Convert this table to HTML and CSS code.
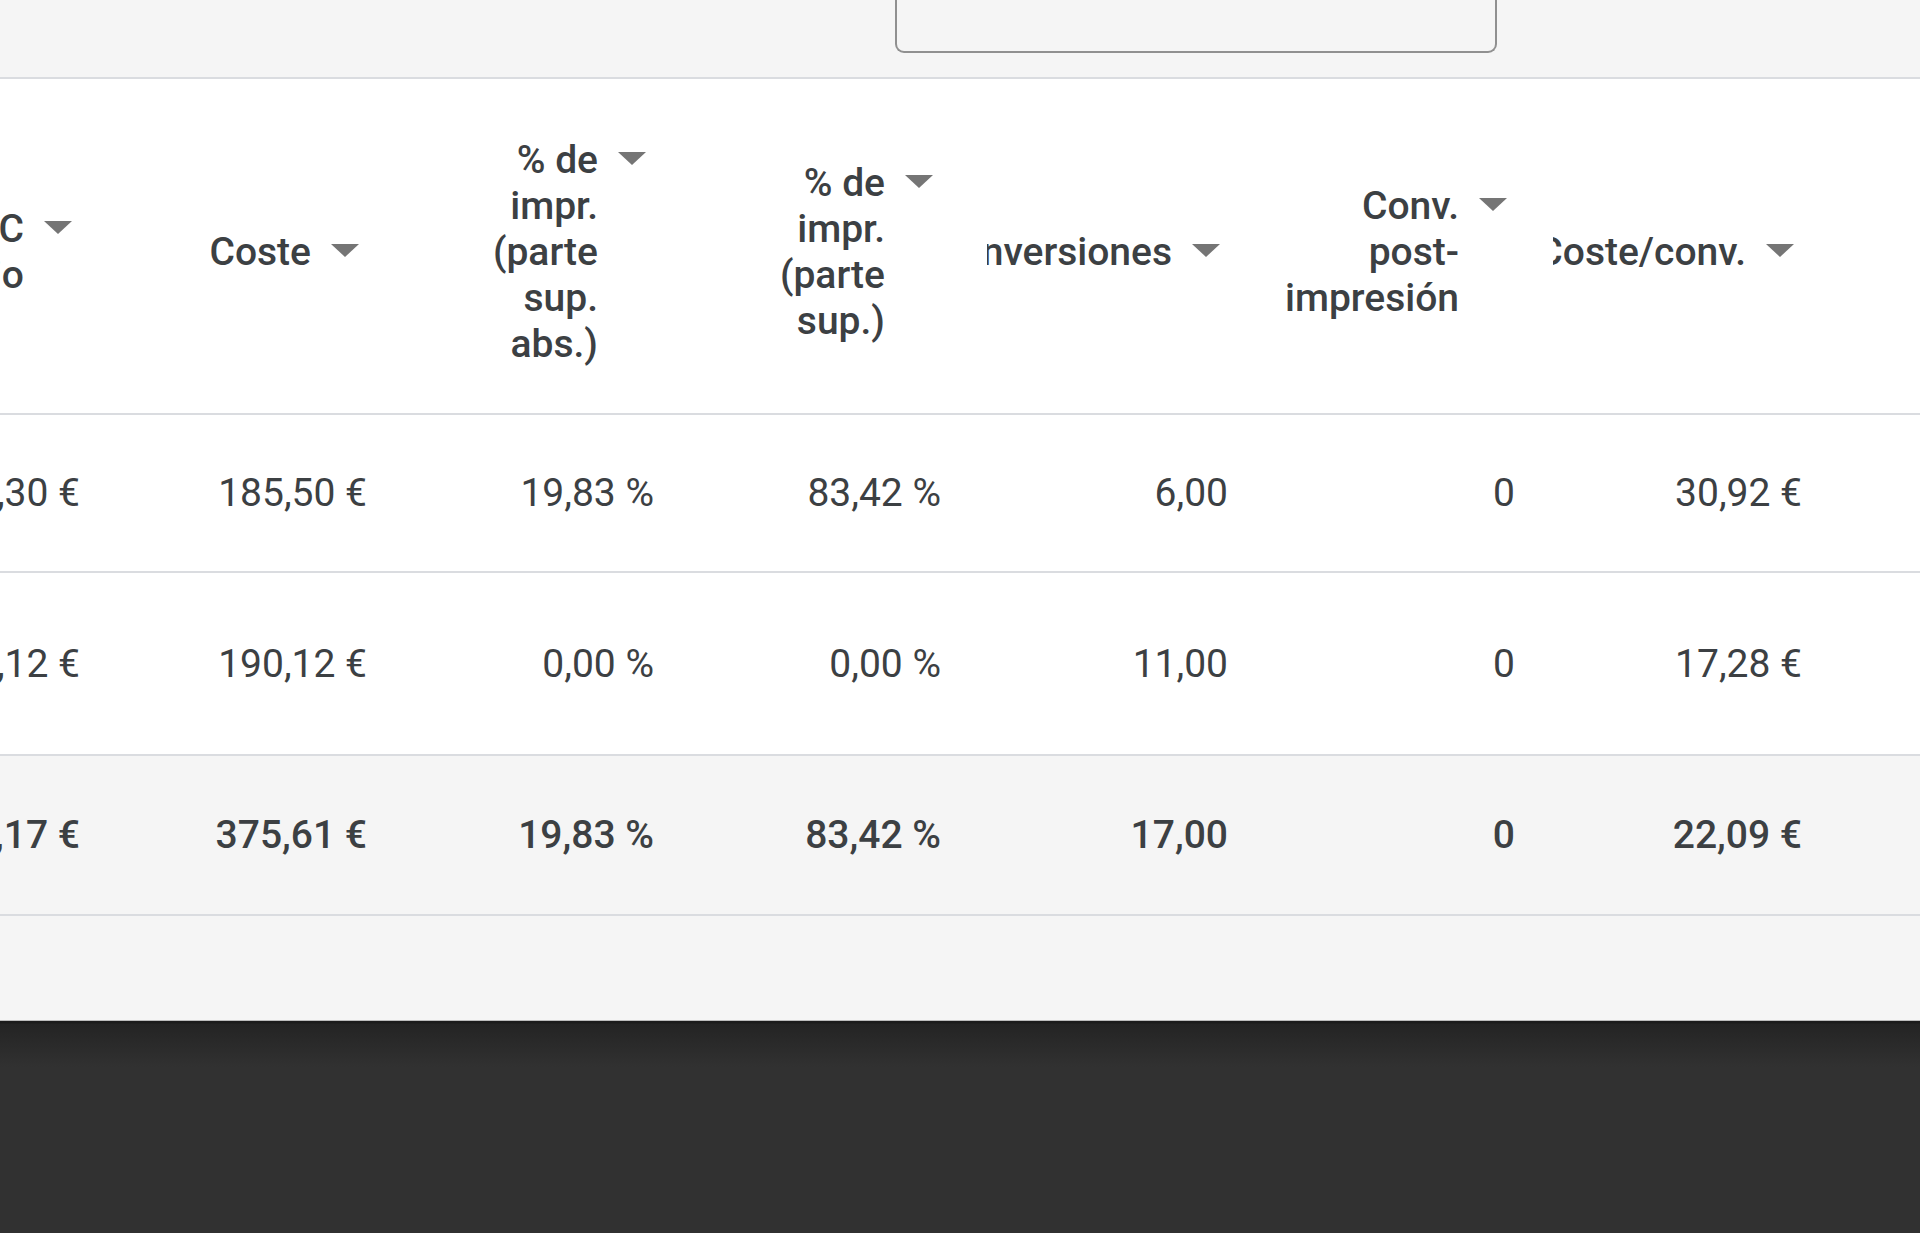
FILE: index.html
```html
<!DOCTYPE html>
<html lang="es">
<head>
    <meta charset="utf-8">
    <meta name="viewport" content="width=device-width, initial-scale=1">
    <title>Campañas</title>
    <link rel="stylesheet" href="styles.css">
</head>

<body>
    <div class="topbar">
        <div class="search"></div>
    </div>

    <div class="scroller">
        <div class="grid">
            <div class="row head">
                <div class="th"><div class="sort"><div class="clip"><span class="lbl lbl-cpc">CPC medio</span></div><span class="caret"></span></div></div>
                <div class="th"><div class="sort"><div class="clip"><span class="lbl">Coste</span></div><span class="caret"></span></div></div>
                <div class="th"><div class="sort"><div class="clip"><span class="lbl lbl-narrow">% de impr. (parte sup. abs.)</span></div><span class="caret"></span></div></div>
                <div class="th"><div class="sort"><div class="clip"><span class="lbl lbl-narrow">% de impr. (parte sup.)</span></div><span class="caret"></span></div></div>
                <div class="th"><div class="sort"><div class="clip clip-conv"><span class="lbl nowrap">Conversiones</span></div><span class="caret"></span></div></div>
                <div class="th"><div class="sort"><div class="clip"><span class="lbl lbl-mid">Conv. post-impresión</span></div><span class="caret"></span></div></div>
                <div class="th"><div class="sort"><div class="clip clip-cost"><span class="lbl nowrap">Coste/conv.</span></div><span class="caret"></span></div></div>
                <div class="th"></div>
            </div>

            <div class="row r1">
                <div class="td">1,30 €</div>
                <div class="td">185,50 €</div>
                <div class="td">19,83 %</div>
                <div class="td">83,42 %</div>
                <div class="td">6,00</div>
                <div class="td">0</div>
                <div class="td">30,92 €</div>
                <div class="td"></div>
            </div>

            <div class="row r2">
                <div class="td">1,12 €</div>
                <div class="td">190,12 €</div>
                <div class="td">0,00 %</div>
                <div class="td">0,00 %</div>
                <div class="td">11,00</div>
                <div class="td">0</div>
                <div class="td">17,28 €</div>
                <div class="td"></div>
            </div>

            <div class="row total">
                <div class="td">1,17 €</div>
                <div class="td">375,61 €</div>
                <div class="td">19,83 %</div>
                <div class="td">83,42 %</div>
                <div class="td">17,00</div>
                <div class="td">0</div>
                <div class="td">22,09 €</div>
                <div class="td"></div>
            </div>
        </div>
    </div>

    <div class="below"></div>
    <div class="footer"></div>
</body>
</html>
```

FILE: styles.css
```css
body{
    margin: 0;
    padding: 0;
    background-color: #f5f5f5;
    color: #3c4043;
    font-family: Roboto, "Noto Sans", sans-serif;
    font-size: 39px;
    line-height: 46px;
    overflow: hidden;}

.topbar{
    height: 77px;
    background-color: #f5f5f5;
    border-bottom: 2px solid #dadce0;}

/* caja de busqueda, solo se ve la parte de abajo */
.search{
    margin-left: 895px;
    width: 598px;
    height: 51px;
    border: 2px solid #909090;
    border-top: none;
    border-radius: 0 0 9px 9px;}

.scroller{
    overflow: hidden;
    background-color: #fff;}

/* la tabla esta desplazada a la izquierda (scroll horizontal) */
.grid{
    margin-left: -183px;}

.row{
    display: grid;
    grid-template-columns: repeat(7, 287px) 1fr;
    border-bottom: 2px solid #dadce0;}

.head{ height: 334px; }
.r1{ height: 156px; }
.r2{ height: 181px; }

.total{
    height: 158px;
    background-color: #f5f5f5;
    font-weight: 500;}

.th{
    display: flex;
    justify-content: flex-end;
    align-items: center;
    padding: 12px 32px 0 0;
    overflow: hidden;
    font-weight: 500;}

.sort{
    display: flex;
    align-items: flex-start;
    gap: 20px;}

.clip{
    display: flex;
    justify-content: flex-end;
    overflow: hidden;}

.clip-conv{ width: 185px; }
.clip-cost{ width: 193px; }

.lbl{
    flex: none;
    display: block;
    text-align: right;}

.lbl-cpc{ max-width: 150px; }
.lbl-narrow{ max-width: 130px; }
.lbl-mid{ max-width: 185px; }

.nowrap{ white-space: nowrap; }

.caret{
    flex: none;
    width: 0;
    height: 0;
    margin-top: 15px;
    border-left: 14px solid transparent;
    border-right: 14px solid transparent;
    border-top: 13px solid #757575;}

.td{
    display: flex;
    justify-content: flex-end;
    align-items: center;
    padding-right: 24px;
    white-space: nowrap;}

.below{
    height: 104px;
    background-color: #f5f5f5;}

.footer{
    height: 212px;
    border-top: 1px solid #bdbdbd;
    background: linear-gradient(#1c1c1c 0, #1c1c1c 2px, #242424 3px, #313131 46px, #313131 100%);}
```
